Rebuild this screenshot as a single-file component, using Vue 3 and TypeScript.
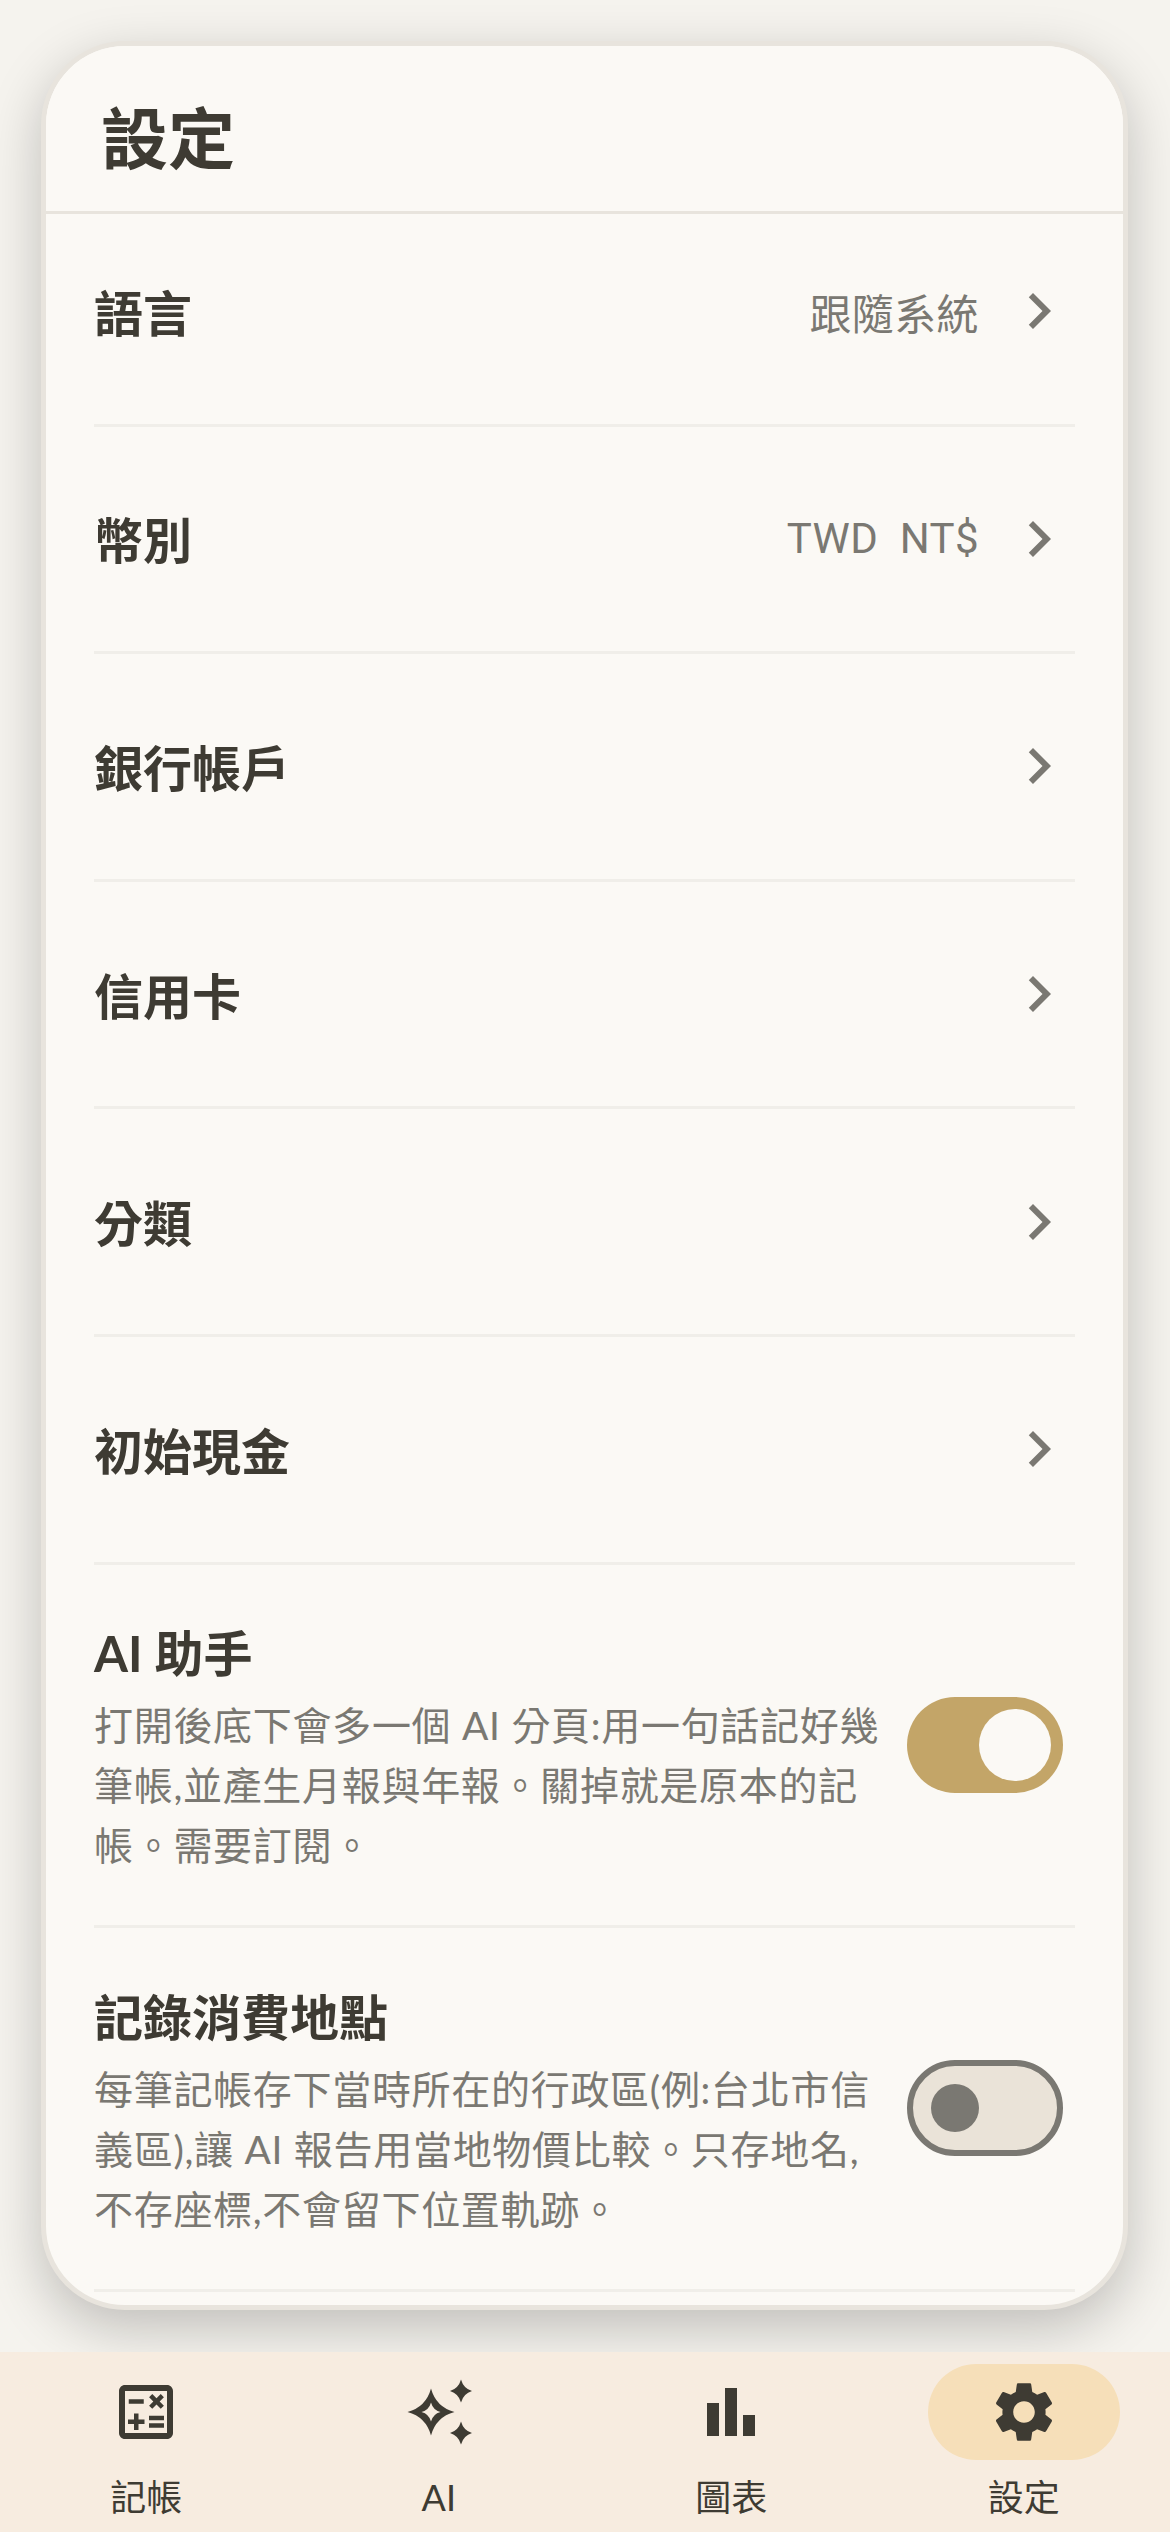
<script setup lang="ts">
interface NavRow { label: string; value?: string }
const rows: NavRow[] = [
  { label: '語言', value: '跟隨系統' },
  { label: '幣別', value: 'TWD\u00a0\u00a0NT$' },
  { label: '銀行帳戶' },
  { label: '信用卡' },
  { label: '分類' },
  { label: '初始現金' },
]
</script>

<template>
  <div class="page">
    <main class="main">
      <section class="card">
        <header class="head"><h1>設定</h1></header>
        <div class="list">
          <div v-for="r in rows" :key="r.label" class="row">
            <span class="title">{{ r.label }}</span>
            <span class="end">
              <span v-if="r.value" class="value">{{ r.value }}</span>
              <svg class="chev" viewBox="0 0 24 24"><path d="M10 6L8.59 7.41 13.17 12l-4.58 4.59L10 18l6-6z" /></svg>
            </span>
          </div>
          <div class="row tall">
            <div class="text">
              <div class="title">AI 助手</div>
              <p>打開後底下會多一個 AI 分頁:用一句話記好幾筆帳,並產生月報與年報。關掉就是原本的記帳。需要訂閱。</p>
            </div>
            <span class="switch on"><i></i></span>
          </div>
          <div class="row tall">
            <div class="text">
              <div class="title">記錄消費地點</div>
              <p>每筆記帳存下當時所在的行政區(例:台北市信義區),讓 AI 報告用當地物價比較。只存地名,不存座標,不會留下位置軌跡。</p>
            </div>
            <span class="switch"><i></i></span>
          </div>
        </div>
      </section>
    </main>
    <nav class="nav">
      <div class="tab">
        <span class="pill">
          <svg viewBox="0 0 24 24"><path fill-rule="evenodd" d="M19 3H5C3.9 3 3 3.9 3 5v14c0 1.1.9 2 2 2h14c1.1 0 2-.9 2-2V5C21 3.9 20.1 3 19 3zM19 19H5V5h14V19z" /><path d="M6.25 7.72h5v1.5h-5zM13 15.75h5v1.5h-5zM13 13.25h5v1.5h-5z" /><path d="M8 18h1.5v-2h2v-1.5h-2v-2H8v2H6V16h2zM14.09 10.95l1.41-1.41 1.41 1.41 1.06-1.06-1.41-1.42 1.41-1.41L16.91 6 15.5 7.41 14.09 6l-1.06 1.06 1.41 1.41-1.41 1.42z" /></svg>
        </span>
        <span class="lbl">記帳</span>
      </div>
      <div class="tab">
        <span class="pill">
          <svg viewBox="0 0 72 72"><path fill-rule="evenodd" d="M28 12.500Q33 31 51.500 36Q33 41 28 59.500Q23 41 4.500 36Q23 31 28 12.500ZM28 26.500Q26 34 18.500 36Q26 38 28 45.500Q30 38 37.500 36Q30 34 28 26.500Z" /><path d="M58 3.500Q60.500 12.500 69 15Q60.500 17.500 58 26.500Q55.500 17.500 47 15Q55.500 12.500 58 3.500ZM58 45.500Q60.500 54.500 69 57Q60.500 59.500 58 68.500Q55.500 59.500 47 57Q55.500 54.500 58 45.500Z" /></svg>
        </span>
        <span class="lbl">AI</span>
      </div>
      <div class="tab">
        <span class="pill">
          <svg viewBox="0 0 24 24"><path d="M4 9h4v11H4zm12 4h4v7h-4zm-6-9h4v16h-4z" /></svg>
        </span>
        <span class="lbl">圖表</span>
      </div>
      <div class="tab active">
        <span class="pill">
          <svg viewBox="0 0 24 24"><path d="M19.14 12.94c.04-.3.06-.61.06-.94 0-.32-.02-.64-.07-.94l2.03-1.58c.18-.14.23-.41.12-.61l-1.92-3.32c-.12-.22-.37-.29-.59-.22l-2.39.96c-.5-.38-1.03-.7-1.62-.94l-.36-2.54c-.04-.24-.24-.41-.48-.41h-3.84c-.24 0-.43.17-.47.41l-.36 2.54c-.59.24-1.13.57-1.62.94l-2.39-.96c-.22-.08-.47 0-.59.22L2.74 8.87c-.12.21-.08.47.12.61l2.03 1.58c-.05.3-.09.63-.09.94s.02.64.07.94l-2.03 1.58c-.18.14-.23.41-.12.61l1.92 3.32c.12.22.37.29.59.22l2.39-.96c.5.38 1.03.7 1.62.94l.36 2.54c.05.24.24.41.48.41h3.84c.24 0 .44-.17.47-.41l.36-2.54c.59-.24 1.13-.56 1.62-.94l2.39.96c.22.08.47 0 .59-.22l1.92-3.32c.12-.22.07-.47-.12-.61l-2.01-1.58zM12 15.6c-1.98 0-3.6-1.62-3.6-3.6s1.62-3.6 3.6-3.6 3.6 1.62 3.6 3.6-1.62 3.6-3.6 3.6z" /></svg>
        </span>
        <span class="lbl">設定</span>
      </div>
    </nav>
  </div>
</template>

<style>
html, body { margin: 0; background: #f5f3ee; }
</style>

<style scoped>
.page {
  width: 1170px;
  height: 2532px;
  display: flex;
  flex-direction: column;
  overflow: hidden;
  background: #f5f3ee;
  color: #3e3b33;
  font-family: "Lato", "Noto Sans CJK TC", sans-serif;
}
.main {
  flex: 1;
  min-height: 0;
  padding: 41px 42px 42px 41px;
}
.card {
  box-sizing: border-box;
  height: 100%;
  display: flex;
  flex-direction: column;
  background: #fbf9f5;
  border: 5px solid #e8e4dd;
  border-radius: 84px;
  overflow: hidden;
  box-shadow: 0 18px 54px rgba(0, 0, 0, 0.22);
}
.head {
  position: relative;
  z-index: 1;
  flex: none;
  box-sizing: border-box;
  height: 168px;
  display: flex;
  align-items: center;
  padding: 20px 0 0 55px;
  background: #fbf9f5;
  border-bottom: 3px solid #e8e4dd;
}
h1 {
  margin: 0;
  font-size: 67px;
  line-height: 1;
  font-weight: 700;
}
.list {
  margin-top: -15px;
  padding: 0 48px;
}
.row {
  box-sizing: border-box;
  height: 227.6px;
  display: flex;
  align-items: center;
  justify-content: space-between;
  border-bottom: 3px solid #f0eee9;
}
.title {
  font-size: 49px;
  line-height: 66px;
  font-weight: 700;
}
.row > .title {
  padding-top: 3px;
}
.end {
  display: flex;
  align-items: center;
  gap: 24px;
}
.value {
  font-family: "Roboto", "Noto Sans CJK TC", sans-serif;
  font-size: 42px;
  letter-spacing: 0.4px;
  color: #7a7872;
}
.chev {
  width: 72px;
  height: 72px;
  fill: #7a7872;
  display: block;
}
.tall {
  height: 363.6px;
  padding: 0 12px 0 0;
}
.text {
  width: 790px;
  padding-top: 6px;
}
.text p {
  margin: 9px 0 0;
  font-size: 39px;
  line-height: 60px;
  letter-spacing: 0.7px;
  color: #7a7872;
}
.switch {
  flex: none;
  box-sizing: border-box;
  width: 156px;
  height: 96px;
  border-radius: 48px;
  border: 6px solid #7a7872;
  background: #eae3d8;
  display: flex;
  align-items: center;
  padding-left: 18px;
}
.switch i {
  display: block;
  width: 48px;
  height: 48px;
  border-radius: 50%;
  background: #7a7872;
}
.switch.on {
  background: #c3a568;
  border: 0;
  padding-left: 72px;
}
.switch.on i {
  width: 72px;
  height: 72px;
  background: #fbf9f5;
}
.nav {
  position: relative;
  z-index: 2;
  flex: none;
  height: 180px;
  display: grid;
  grid-template-columns: repeat(4, 1fr);
  background: #f7ece0;
}
.tab {
  display: flex;
  flex-direction: column;
  align-items: center;
  padding-top: 12px;
}
.pill {
  width: 192px;
  height: 96px;
  border-radius: 48px;
  display: flex;
  align-items: center;
  justify-content: center;
}
.pill svg {
  width: 72px;
  height: 72px;
  fill: #3e3b33;
  display: block;
}
.active .pill {
  background: #f6dfb9;
}
.lbl {
  margin-top: 12px;
  font-size: 36px;
  line-height: 50px;
}
</style>
